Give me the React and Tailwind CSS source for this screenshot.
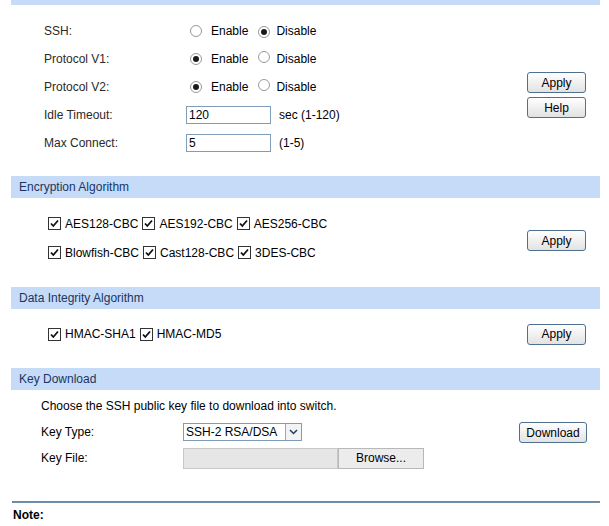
import React from "react";

function Radio({ checked }) {
  return (
    <span className="inline-flex items-center justify-center w-[12px] h-[12px] rounded-full border border-[#9a9a9a] bg-white shrink-0">
      {checked && <span className="w-[6px] h-[6px] rounded-full bg-[#1a1a1a]" />}
    </span>
  );
}

function Check() {
  return (
    <span className="inline-flex items-center justify-center w-[13px] h-[13px] border border-[#333] bg-white shrink-0">
      <svg width="11" height="11" viewBox="0 0 11 11">
        <path d="M2 5.5 L4.3 8 L9 2.5" fill="none" stroke="#111" strokeWidth="1.8" />
      </svg>
    </span>
  );
}

function Btn({ children, w = "w-[59px]" }) {
  return (
    <div className={`${w} h-[21px] flex items-center justify-center rounded-[3px] border border-[#50708f] bg-gradient-to-b from-[#ffffff] to-[#e2e2e2] text-[12px] text-black`}>
      {children}
    </div>
  );
}

function Bar({ children }) {
  return (
    <div className="h-[22px] bg-[#c6dbf8] flex items-center pl-[8px] text-[12px] text-[#1b355f]">
      {children}
    </div>
  );
}

function RadioRow({ label, first }) {
  return (
    <div className="h-[28px] flex items-center">
      <div className="w-[146px] text-[#2a2a2a]">{label}</div>
      <Radio checked={!first} />
      <span className="ml-[9px] text-black">Enable</span>
      <span className="ml-[10px]"><Radio checked={first} /></span>
      <span className="ml-[6px] text-black">Disable</span>
    </div>
  );
}

function InputRow({ label, value, hint }) {
  return (
    <div className="h-[28px] flex items-center">
      <div className="w-[142px] text-[#2a2a2a]">{label}</div>
      <div className="w-[85px] h-[18px] border border-[#7f9db9] bg-white flex items-center pl-[2px] text-black">
        {value}
      </div>
      <span className="ml-[8px] text-black">{hint}</span>
    </div>
  );
}

function CItem({ label }) {
  return (
    <span className="inline-flex items-center mr-[4px]">
      <Check />
      <span className="ml-[4px] text-black">{label}</span>
    </span>
  );
}

export default function App() {
  return (
    <div className="w-[609px] h-[526px] bg-white overflow-hidden font-['Liberation_Sans',Arial,sans-serif] text-[12px] text-[#222]">
      <div className="ml-[11px] w-[589px]">
        <div className="h-[5px] bg-[#c6dbf8]" />

        <div className="flex pt-[12px] pb-[19px]">
          <div className="pl-[33px] flex flex-col">
            <RadioRow label="SSH:" first />
            <RadioRow label="Protocol V1:" />
            <RadioRow label="Protocol V2:" />
            <InputRow label="Idle Timeout:" value="120" hint="sec (1-120)" />
            <InputRow label="Max Connect:" value="5" hint="(1-5)" />
          </div>
          <div className="ml-auto mr-[14px] pt-[55px] flex flex-col gap-[4px]">
            <Btn>Apply</Btn>
            <Btn>Help</Btn>
          </div>
        </div>

        <Bar>Encryption Algorithm</Bar>
        <div className="flex items-center pt-[11px] pb-[20px]">
          <div className="pl-[37px] flex flex-col">
            <div className="h-[29px] flex items-center">
              <CItem label="AES128-CBC" />
              <CItem label="AES192-CBC" />
              <CItem label="AES256-CBC" />
            </div>
            <div className="h-[29px] flex items-center">
              <CItem label="Blowfish-CBC" />
              <CItem label="Cast128-CBC" />
              <CItem label="3DES-CBC" />
            </div>
          </div>
          <div className="ml-auto mr-[14px] mt-[5px]">
            <Btn>Apply</Btn>
          </div>
        </div>

        <Bar>Data Integrity Algorithm</Bar>
        <div className="flex items-center pt-[11px] pb-[20px]">
          <div className="pl-[37px] h-[28px] flex items-center">
            <CItem label="HMAC-SHA1" />
            <CItem label="HMAC-MD5" />
          </div>
          <div className="ml-auto mr-[14px]">
            <Btn>Apply</Btn>
          </div>
        </div>

        <Bar>Key Download</Bar>
        <div className="flex pt-[3px] pb-[30px]">
          <div className="pl-[30px] flex flex-col">
            <div className="h-[26px] flex items-center text-black">
              Choose the SSH public key file to download into switch.
            </div>
            <div className="h-[26px] flex items-center">
              <div className="w-[142px] text-black">Key Type:</div>
              <div className="h-[18px] w-[119px] border border-[#7f9db9] bg-white flex items-stretch">
                <span className="flex-1 flex items-center pl-[2px] text-black">SSH-2 RSA/DSA</span>
                <span className="w-[16px] border-l border-[#9aa7b5] bg-[#f3f3f3] flex items-center justify-center">
                  <svg width="9" height="6" viewBox="0 0 9 6">
                    <path d="M1 1 L4.5 4.5 L8 1" fill="none" stroke="#1e3a6a" strokeWidth="1.5" />
                  </svg>
                </span>
              </div>
            </div>
            <div className="h-[26px] flex items-center">
              <div className="w-[142px] text-black">Key File:</div>
              <div className="h-[21px] w-[155px] border border-[#c8c8c8] bg-[#e6e6e6]" />
              <div className="h-[21px] w-[86px] border border-[#b8b8b8] bg-[#ececec] flex items-center justify-center text-black">
                Browse...
              </div>
            </div>
          </div>
          <div className="ml-auto mr-[13px] pt-[29px]">
            <Btn w="w-[68px]">Download</Btn>
          </div>
        </div>

        <div className="h-[2px] bg-[#6c8ca8] ml-[1px]" />
        <div className="pt-[3px] pl-[2px] font-bold text-black">Note:</div>
      </div>
    </div>
  );
}
